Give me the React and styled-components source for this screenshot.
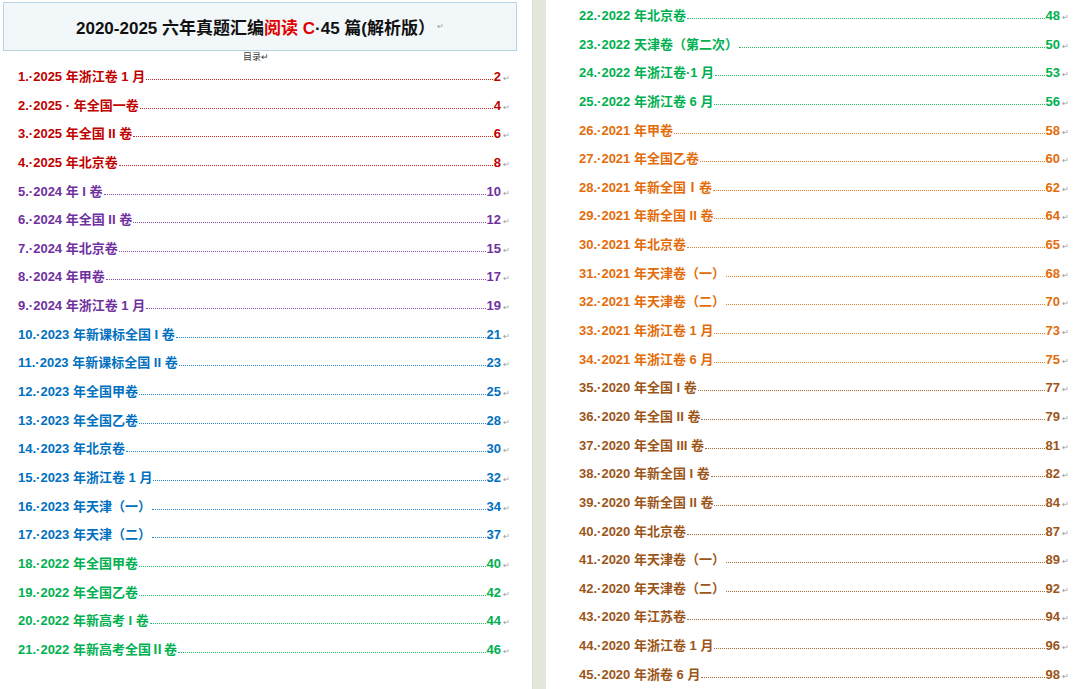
import React from "react";
import styled, { createGlobalStyle } from "styled-components";

const G = createGlobalStyle`
  html,body{margin:0;padding:0;background:#fff;}
  body{font-family:"Liberation Sans","Noto Sans CJK SC",sans-serif;}
`;
const C = { r: "#c00000", p: "#7030a0", b: "#0070c0", g: "#00b050", o: "#e36c09", n: "#9c5518" };

const left = [
  ["1.·2025 年浙江卷 1 月", 2, "r"], ["2.·2025 · 年全国一卷", 4, "r"], ["3.·2025 年全国 II 卷", 6, "r"], ["4.·2025 年北京卷", 8, "r"],
  ["5.·2024 年 I 卷", 10, "p"], ["6.·2024 年全国 II 卷", 12, "p"], ["7.·2024 年北京卷", 15, "p"], ["8.·2024 年甲卷", 17, "p"], ["9.·2024 年浙江卷 1 月", 19, "p"],
  ["10.·2023 年新课标全国 I 卷", 21, "b"], ["11.·2023 年新课标全国 II 卷", 23, "b"], ["12.·2023 年全国甲卷", 25, "b"], ["13.·2023 年全国乙卷", 28, "b"], ["14.·2023 年北京卷", 30, "b"], ["15.·2023 年浙江卷 1 月", 32, "b"], ["16.·2023 年天津（一）", 34, "b"], ["17.·2023 年天津（二）", 37, "b"],
  ["18.·2022 年全国甲卷", 40, "g"], ["19.·2022 年全国乙卷", 42, "g"], ["20.·2022 年新高考 I 卷", 44, "g"], ["21.·2022 年新高考全国Ⅱ卷", 46, "g"],
];
const right = [
  ["22.·2022 年北京卷", 48, "g"], ["23.·2022 天津卷（第二次）", 50, "g"], ["24.·2022 年浙江卷·1 月", 53, "g"], ["25.·2022 年浙江卷 6 月", 56, "g"],
  ["26.·2021 年甲卷", 58, "o"], ["27.·2021 年全国乙卷", 60, "o"], ["28.·2021 年新全国Ⅰ卷", 62, "o"], ["29.·2021 年新全国 II 卷", 64, "o"], ["30.·2021 年北京卷", 65, "o"], ["31.·2021 年天津卷（一）", 68, "o"], ["32.·2021 年天津卷（二）", 70, "o"], ["33.·2021 年浙江卷 1 月", 73, "o"], ["34.·2021 年浙江卷 6 月", 75, "o"],
  ["35.·2020 年全国 I 卷", 77, "n"], ["36.·2020 年全国 II 卷", 79, "n"], ["37.·2020 年全国 III 卷", 81, "n"], ["38.·2020 年新全国 I 卷", 82, "n"], ["39.·2020 年新全国 II 卷", 84, "n"], ["40.·2020 年北京卷", 87, "n"], ["41.·2020 年天津卷（一）", 89, "n"], ["42.·2020 年天津卷（二）", 92, "n"], ["43.·2020 年江苏卷", 94, "n"], ["44.·2020 年浙江卷 1 月", 96, "n"], ["45.·2020 年浙卷 6 月", 98, "n"],
];

const Wrap = styled.div`display:flex;width:1080px;height:689px;overflow:hidden;background:#fff;`;
const Page = styled.div`width:${p => p.w}px;flex:none;display:flex;flex-direction:column;padding:${p => p.pad};box-sizing:border-box;`;
const Gutter = styled.div`width:13px;flex:none;background:#e3e7dc;border-left:1px solid #d6dbcf;`;
const TitleBox = styled.div`margin:2px 15px 0 3px;height:47px;background:#f2f7fa;border:1px solid #b9d3e2;display:flex;align-items:center;justify-content:center;font-size:17px;font-weight:bold;color:#111;`;
const Red = styled.span`color:#e00000;`;
const Mark = styled.span`color:#999;font-size:8px;font-weight:normal;margin-left:2px;`;
const Toc = styled.div`text-align:center;font-size:9px;color:#333;margin:0;padding-right:20px;height:12px;line-height:12px;`;
const List = styled.div`padding:${p => p.pad};`;
const Row = styled.div`display:flex;align-items:baseline;height:28.65px;line-height:28.65px;font-size:13px;font-weight:bold;color:${p => C[p.c]};white-space:nowrap;`;
const Dots = styled.span`flex:1;border-bottom:1.5px dotted ${p => C[p.c]};margin:0 1px;transform:translateY(-1px);opacity:0.85;`;

function Entry({ t, n, c }) {
  return <Row c={c}><span>{t}</span><Dots c={c} /><span>{n}</span><Mark>↵</Mark></Row>;
}

export default function App() {
  return (
    <Wrap>
      <G />
      <Page w={532} pad="0">
        <TitleBox>2020-2025 六年真题汇编<Red>阅读 C</Red>·45 篇(解析版）<Mark>↵</Mark></TitleBox>
        <Toc>目录↵</Toc>
        <List pad="0 22px 0 18px">
          {left.map(([t, n, c]) => <Entry key={t} t={t} n={n} c={c} />)}
        </List>
      </Page>
      <Gutter />
      <Page w={535} pad="2px 12px 0 33px">
        {right.map(([t, n, c]) => <Entry key={t} t={t} n={n} c={c} />)}
      </Page>
    </Wrap>
  );
}
